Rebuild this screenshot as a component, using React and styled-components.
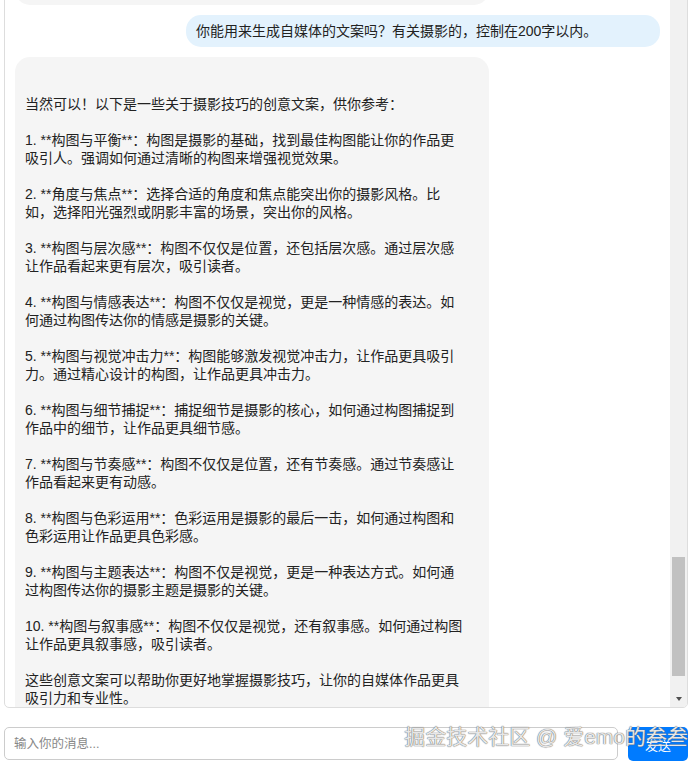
import React, { useLayoutEffect, useRef, useState } from 'react'
import styled, { createGlobalStyle } from 'styled-components'

const GlobalStyle = createGlobalStyle`
    html, body {
        margin:0;
        height:100%;
        overflow:hidden;
        background:#fff;
    }
    body {
        font-family:"Liberation Sans", "Noto Sans CJK SC", sans-serif;
        color:#222;
    }
`

const Container = styled.div`
    position:relative;
    height:100vh;
    box-sizing:border-box;
    display:flex;
    flex-direction:column;
    justify-content:flex-end;
    padding:0 7px 4px 4px;
`

const ChatBox = styled.div`
    flex-shrink:0;
    height:768px;
    box-sizing:border-box;
    display:flex;
    border:1px solid #ddd;
    border-radius:5px;
    overflow:hidden;
`

const MessageList = styled.div`
    flex:1;
    min-width:0;
    display:flex;
    flex-direction:column;
    gap:10px;
    padding:10px;
    overflow-y:scroll;
    scrollbar-width:none;

    &::-webkit-scrollbar{
        display:none;
    }
`

const ScrollRail = styled.div`
    width:17px;
    flex-shrink:0;
    display:flex;
    flex-direction:column;
    background:#f1f1f1;
`

const ArrowButton = styled.div`
    height:17px;
    flex-shrink:0;
    display:flex;
    align-items:center;
    justify-content:center;

    &::after{
        content:"";
        border-left:3.5px solid transparent;
        border-right:3.5px solid transparent;
        ${props => props.$down
            ? 'border-top:4px solid #505050;'
            : 'border-bottom:4px solid #505050;'}
    }
`

const Track = styled.div`
    flex:1;
    position:relative;
`

const Thumb = styled.div`
    position:absolute;
    left:2px;
    right:2px;
    background:#c1c1c1;
`

const Bubble = styled.div`
    flex-shrink:0;
    box-sizing:border-box;
    width:73.5%;
    align-self:${props => props.$user ? 'flex-end' : 'flex-start'};
    padding:${props => props.$user ? '7px 10px' : '20px 23px 10px 10px'};
    border-radius:15px;
    background:${props => props.$user ? '#e3f2fd' : '#f5f5f5'};
    font-size:14px;
    line-height:18px;
    white-space:pre-wrap;
`

const InputRow = styled.div`
    flex-shrink:0;
    display:flex;
    gap:10px;
    height:34px;
    margin-top:19px;
`

const MessageInput = styled.input`
    flex:1;
    height:33px;
    box-sizing:border-box;
    padding:0 9px;
    border:1px solid #ccc;
    border-radius:5px;
    font-family:inherit;
    font-size:12.5px;
    outline:none;

    &::placeholder{
        color:#888;
    }
`

const SendButton = styled.button`
    width:60px;
    border:none;
    border-radius:5px;
    background:#007bff;
    color:#fff;
    font-family:inherit;
    font-size:13px;
`

const Watermark = styled.div`
    position:absolute;
    right:7px;
    bottom:18px;
    font-size:21px;
    line-height:1;
    color:rgba(255,255,255,0.85);
    text-shadow:0 0 1px #666, 0 0 1px #666;
    pointer-events:none;
    white-space:nowrap;
`

const question = '你能用来生成自媒体的文案吗？有关摄影的，控制在200字以内。'

const answer = `
当然可以！以下是一些关于摄影技巧的创意文案，供你参考：

1. **构图与平衡**：构图是摄影的基础，找到最佳构图能让你的作品更吸引人。强调如何通过清晰的构图来增强视觉效果。

2. **角度与焦点**：选择合适的角度和焦点能突出你的摄影风格。比如，选择阳光强烈或阴影丰富的场景，突出你的风格。

3. **构图与层次感**：构图不仅仅是位置，还包括层次感。通过层次感让作品看起来更有层次，吸引读者。

4. **构图与情感表达**：构图不仅仅是视觉，更是一种情感的表达。如何通过构图传达你的情感是摄影的关键。

5. **构图与视觉冲击力**：构图能够激发视觉冲击力，让作品更具吸引力。通过精心设计的构图，让作品更具冲击力。

6. **构图与细节捕捉**：捕捉细节是摄影的核心，如何通过构图捕捉到作品中的细节，让作品更具细节感。

7. **构图与节奏感**：构图不仅仅是位置，还有节奏感。通过节奏感让作品看起来更有动感。

8. **构图与色彩运用**：色彩运用是摄影的最后一击，如何通过构图和色彩运用让作品更具色彩感。

9. **构图与主题表达**：构图不仅是视觉，更是一种表达方式。如何通过构图传达你的摄影主题是摄影的关键。

10. **构图与叙事感**：构图不仅仅是视觉，还有叙事感。如何通过构图让作品更具叙事感，吸引读者。

这些创意文案可以帮助你更好地掌握摄影技巧，让你的自媒体作品更具吸引力和专业性。




`

// same prompt was tried several times, so the history repeats
const messages = Array.from({ length: 6 }).flatMap(() => [
    { user: true, text: question },
    { user: false, text: answer },
])

// the view stops a little short of the very bottom
const UNSCROLLED = 92
const ARROW = 17

const App = () => {
    const listRef = useRef(null)
    const [thumb, setThumb] = useState({ top: 0, height: 0 })

    useLayoutEffect(() => {
        const el = listRef.current
        el.scrollTop = el.scrollHeight - el.clientHeight - UNSCROLLED
        const track = el.clientHeight - ARROW * 2
        setThumb({
            top: el.scrollTop / el.scrollHeight * track,
            height: el.clientHeight / el.scrollHeight * track,
        })
    }, [])

    return (
        <Container>
            <GlobalStyle />
            <ChatBox>
                <MessageList ref={listRef}>
                    {messages.map((m, i) => (
                        <Bubble key={i} $user={m.user}>{m.text}</Bubble>
                    ))}
                </MessageList>
                <ScrollRail>
                    <ArrowButton />
                    <Track>
                        <Thumb style={{ top: thumb.top, height: thumb.height }} />
                    </Track>
                    <ArrowButton $down />
                </ScrollRail>
            </ChatBox>
            <InputRow>
                <MessageInput placeholder="输入你的消息..." />
                <SendButton>发送</SendButton>
            </InputRow>
            <Watermark>掘金技术社区 @ 爱emo的叁叁</Watermark>
        </Container>
    )
}

export default App
